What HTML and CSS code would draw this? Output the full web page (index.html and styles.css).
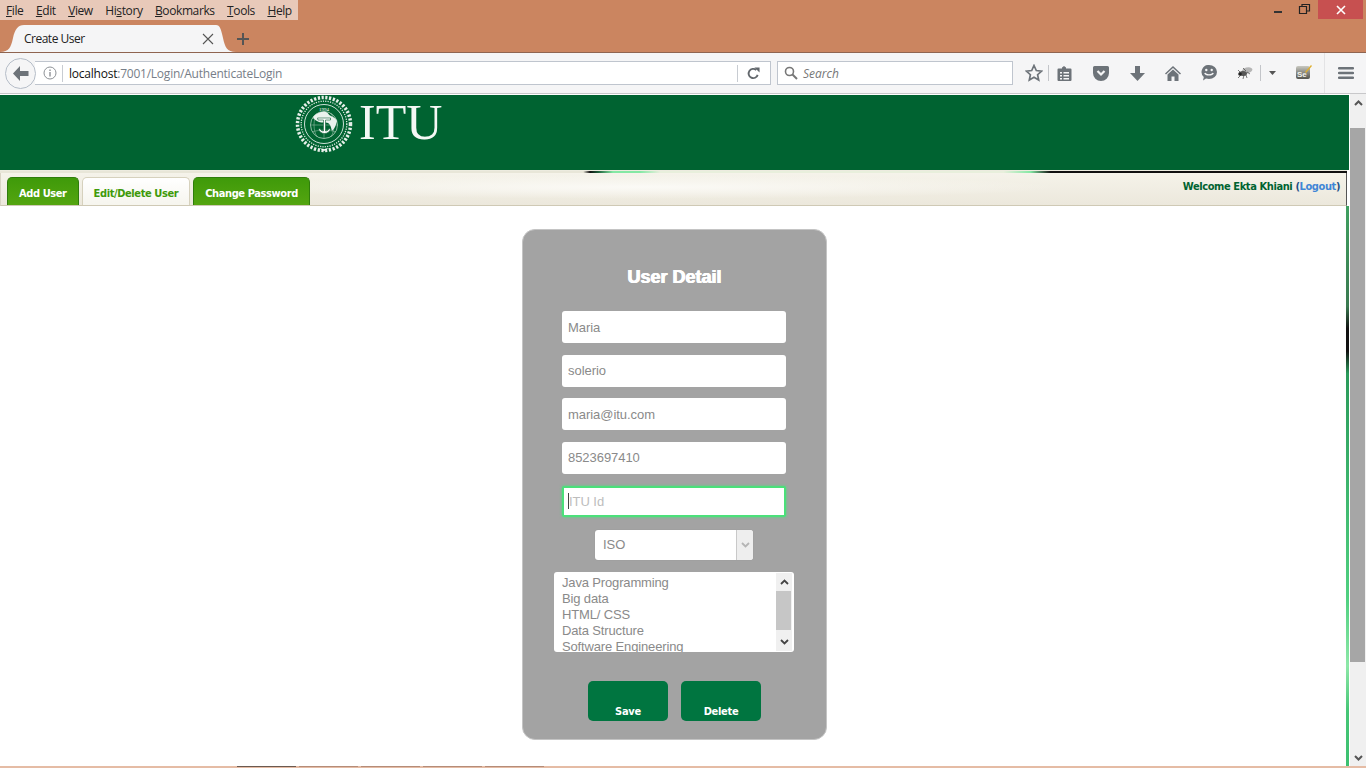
FILE: index.html
```html
<!DOCTYPE html>
<html lang="en">
<head>
<meta charset="utf-8">
<title>Create User</title>
<link rel="stylesheet" href="styles.css">
</head>
<body>
<div class="chrome">
  <div class="title-area">
    <div class="top-row">
      <nav class="menubar">
        <span><u>F</u>ile</span><span><u>E</u>dit</span><span><u>V</u>iew</span><span>Hi<u>s</u>tory</span><span><u>B</u>ookmarks</span><span><u>T</u>ools</span><span><u>H</u>elp</span>
      </nav>
      <div class="winctl">
        <svg class="wbtn" width="46" height="19" viewBox="0 0 46 19"><rect x="34" y="11" width="8" height="2" fill="#333"/></svg>
        <svg class="wbtn" width="28" height="19" viewBox="0 0 28 19"><path d="M13.500 6.500h7v7h-7zM16 6V4.500h7.500V11H21" fill="none" stroke="#222" stroke-width="1.200"/></svg>
        <div class="close"><svg width="10" height="10" viewBox="0 0 10 10"><path d="M1 1l8 8M9 1l-8 8" stroke="#fff" stroke-width="1.600"/></svg></div>
      </div>
    </div>
    <div class="tab-row">
      <div class="browser-tab">
        <svg class="tab-curve" width="24" height="27" viewBox="0 0 24 27"><path d="M0 27C9 27 11 22 13 13 15 4 18 0 24 0V27z" fill="#f5f5f6"/></svg>
        <div class="tab-body">
          <span class="tab-title">Create User</span>
          <svg width="12" height="12" viewBox="0 0 12 12"><path d="M1 1l10 10M11 1L1 11" stroke="#555" stroke-width="1.100"/></svg>
        </div>
        <svg class="tab-curve" width="20" height="27" viewBox="0 0 20 27"><path d="M20 27C11 27 9 22 7 13 5 4 4 0 0 0V27z" fill="#f5f5f6"/></svg>
      </div>
      <svg class="newtab" width="12" height="12" viewBox="0 0 12 12"><path d="M6 0v12M0 6h12" stroke="#555" stroke-width="2"/></svg>
    </div>
  </div>
  <div class="navbar">
    <div class="back">
      <svg width="17" height="15" viewBox="0 0 17 15"><path d="M8 0L1 7.500 8 15v-5h8.500V5H8z" fill="#6d7379"/></svg>
    </div>
    <div class="urlbar">
      <svg class="info" width="14" height="14" viewBox="0 0 14 14"><circle cx="7" cy="7" r="6" fill="none" stroke="#8d9196" stroke-width="1"/><rect x="6.300" y="6" width="1.400" height="4.500" fill="#8d9196"/><rect x="6.300" y="3.500" width="1.400" height="1.500" fill="#8d9196"/></svg>
      <span class="sep"></span>
      <span class="url"><b>localhost</b>:7001/Login/AuthenticateLogin</span>
      <span class="sep reload-sep"></span>
      <svg class="reload" width="13" height="13" viewBox="0 0 14 14"><path d="M11.500 8.500A5 5 0 1 1 10 3.200" fill="none" stroke="#62676c" stroke-width="2"/><path d="M8 0.500h5.500V6z" fill="#62676c"/></svg>
    </div>
    <div class="searchbar">
      <svg width="14" height="14" viewBox="0 0 14 14"><circle cx="5.500" cy="5.500" r="4" fill="none" stroke="#777" stroke-width="1.600"/><path d="M8.500 8.500l4.500 4.500" stroke="#777" stroke-width="2"/></svg>
      <span>Search</span>
    </div>
    <div class="tools">
      <svg class="t-star" width="18" height="18" viewBox="0 0 18 18"><path d="M9 1.500l2.300 5 5.300.6-4 3.600 1.100 5.300L9 13.300 4.300 16l1.100-5.300-4-3.600 5.300-.6z" fill="none" stroke="#6d7379" stroke-width="1.700"/></svg>
      <span class="tsep"></span>
      <svg class="t-list" width="15" height="15" viewBox="0 0 15 15"><path d="M1.500 2.500H5V1.500L7 0l2 1.500v1h4.500a1 1 0 0 1 1 1V14a1 1 0 0 1-1 1h-12a1 1 0 0 1-1-1V3.500a1 1 0 0 1 1-1z" fill="#6d7379"/><path d="M3 6h2v1.500H3zM6.500 6H12v1.500H6.500zM3 9h2v1.500H3zM6.500 9H12v1.500H6.500zM3 12h2v1.500H3zM6.500 12H12v1.500H6.500z" fill="#f5f5f6"/></svg>
      <svg class="t-pocket" width="16" height="15" viewBox="0 0 16 15"><path d="M1.500 0h13A1.500 1.500 0 0 1 16 1.500V7A8 8 0 0 1 0 7V1.500A1.500 1.500 0 0 1 1.500 0z" fill="#6d7379"/><path d="M4.500 5L8 8.500 11.500 5" fill="none" stroke="#f5f5f6" stroke-width="2.200"/></svg>
      <svg class="t-down" width="15" height="15" viewBox="0 0 15 15"><path d="M5 0h5v7h5l-7.500 8L0 7h5z" fill="#6d7379"/></svg>
      <svg class="t-home" width="16" height="15" viewBox="0 0 16 15"><path d="M8 0L0 7.500l1 1L8 2l7 6.500 1-1z" fill="#6d7379"/><path d="M8 3.500L2.500 8.500V15H6.500V10.500H9.500V15H13.500V8.500z" fill="#6d7379"/></svg>
      <svg class="t-smile" width="16" height="16" viewBox="0 0 16 16"><path d="M8 0a8 7 0 0 1 0 14c-1 0-2 0-3-.4L2 15.500l.8-3.400A7 7 0 0 1 8 0z" fill="#6d7379"/><circle cx="5.300" cy="5" r="1.200" fill="#f5f5f6"/><circle cx="10.700" cy="5" r="1.200" fill="#f5f5f6"/><path d="M3.800 8c1 2.500 7.400 2.500 8.400 0" fill="none" stroke="#f5f5f6" stroke-width="1.400"/></svg>
      <svg class="t-bug" width="16" height="14" viewBox="0 0 16 14"><ellipse cx="10" cy="4.500" rx="5.500" ry="3" fill="#b5b5b5" transform="rotate(-15 10 4.500)"/><ellipse cx="6" cy="7.500" rx="4" ry="2.500" fill="#555"/><circle cx="3" cy="8" r="1.800" fill="#222"/><path d="M1 4l3 3M1 12l3-3M6 13l1-4M10 12l-1-3M6 2l3 3M13 8l-3-2" stroke="#444" stroke-width=".7"/></svg>
      <span class="tsep tsep-2"></span>
      <svg class="t-caret" width="7" height="4" viewBox="0 0 7 4"><path d="M0 0h7L3.500 4z" fill="#555"/></svg>
      <svg class="t-se" width="16" height="15" viewBox="0 0 16 15"><defs><linearGradient id="seg" x1="0" y1="0" x2="0" y2="1"><stop offset="0" stop-color="#c8c8c0"/><stop offset=".5" stop-color="#8a8a84"/><stop offset="1" stop-color="#55554f"/></linearGradient></defs><rect x="0" y="2" width="14" height="13" rx="2" fill="url(#seg)"/><text x="1" y="12.500" font-size="8" font-weight="700" fill="#f2f2ea" font-family="Liberation Sans, sans-serif">Se</text><path d="M9 8l6-7 1 1-6 7z" fill="#e0b030"/></svg>
      <span class="tsep tsep-3"></span>
      <svg class="t-menu" width="16" height="12" viewBox="0 0 16 12"><path d="M1 0h14a1 1 0 0 1 0 2.400H1a1 1 0 0 1 0-2.400zM1 4.800h14a1 1 0 0 1 0 2.400H1a1 1 0 0 1 0-2.400zM1 9.600h14a1 1 0 0 1 0 2.400H1a1 1 0 0 1 0-2.400z" fill="#6d7379"/></svg>
    </div>
  </div>
</div>

<div class="viewport">
  <div class="page">
    <header class="brand">
      <div class="logo">
        <svg width="58" height="58" viewBox="0 0 58 58">
          <circle cx="29" cy="29" r="26.500" fill="none" stroke="#e6efe9" stroke-width="3.500" stroke-dasharray="2.200 1.600"/>
          <circle cx="29" cy="29" r="22.800" fill="none" stroke="#dfeae3" stroke-width="1.300" stroke-dasharray="1.200 1.200"/>
          <circle cx="29" cy="29" r="19.500" fill="none" stroke="#fff" stroke-width=".8"/>
          <text x="29" y="15.500" text-anchor="middle" font-size="5" font-family="Liberation Serif, serif" fill="#fff">1994</text>
          <circle cx="29" cy="30" r="13.500" fill="none" stroke="#cfe2d6" stroke-width=".7"/>
          <path d="M29 16.500v27M15.500 30h27M17 23c7 2.500 17 2.500 24 0M17 37c7-2.500 17-2.500 24 0M22 18c-4 7-4 17 0 24M36 18c4 7 4 17 0 24" stroke="#a9cbb6" stroke-width=".5" fill="none"/>
          <path d="M18 22c3-4 9-6 13-5 3 1 2 3 5 4 3 1 5 3 6 5-1 4-2 7-5 10-1-3-1-6-4-8-3-1-6 0-9-1-3-1-5-3-6-5z" fill="#eaf2ed"/>
          <path d="M22.500 23h13v2h-5v11c2 0 3-1 3.500-2.500l1.500.5c-.5 2.500-3 4.500-6 4.500s-5.500-2-6-4.500l1.500-.5c.5 1.500 1.500 2.500 3.500 2.500V25h-5.500z" fill="#fff" stroke="#0a5c32" stroke-width=".6"/>
          <path d="M24 53l5 3 5-3-5 1.200z" fill="#fff"/>
        </svg>
        <span class="logo-text">ITU</span>
      </div>
    </header>
    <div class="glint-row"><div class="glint"></div></div>
    <div class="tabbar">
      <ul class="tabs">
        <li class="tab">Add User</li>
        <li class="tab active">Edit/Delete User</li>
        <li class="tab">Change Password</li>
      </ul>
      <p class="welcome">Welcome Ekta Khiani <span class="paren">(<a href="#">Logout</a>)</span></p>
    </div>
    <main class="content">
      <form class="card">
        <h2>User Detail</h2>
        <input class="field" type="text" value="Maria">
        <input class="field" type="text" value="solerio">
        <input class="field" type="text" value="maria@itu.com">
        <input class="field" type="text" value="8523697410">
        <div class="field focused"><span class="caret"></span><span class="ph">ITU Id</span></div>
        <div class="select">
          <span class="sel-text">ISO</span>
          <span class="sel-btn"><svg width="9" height="6" viewBox="0 0 9 6"><path d="M1 1l3.500 3.500L8 1" fill="none" stroke="#b5b5b5" stroke-width="1.800"/></svg></span>
        </div>
        <div class="listbox">
          <div class="options">
            <div>Java Programming</div>
            <div>Big data</div>
            <div>HTML/ CSS</div>
            <div>Data Structure</div>
            <div>Software Engineering</div>
          </div>
          <div class="lb-scroll">
            <span class="lb-arrow"><svg width="9" height="6" viewBox="0 0 9 6"><path d="M1 5l3.500-3.500L8 5" fill="none" stroke="#444" stroke-width="1.800"/></svg></span>
            <span class="lb-thumb"></span>
            <span class="lb-arrow lb-down"><svg width="9" height="6" viewBox="0 0 9 6"><path d="M1 1l3.500 3.500L8 1" fill="none" stroke="#444" stroke-width="1.800"/></svg></span>
          </div>
        </div>
        <div class="actions">
          <button type="button" class="btn">Save</button>
          <button type="button" class="btn">Delete</button>
        </div>
      </form>
    </main>
  </div>
  <div class="scrollbar">
    <span class="sb-arrow"><svg width="9" height="6" viewBox="0 0 9 6"><path d="M1 5l3.500-3.500L8 5" fill="none" stroke="#555" stroke-width="2"/></svg></span>
    <span class="sb-thumb"></span>
    <span class="sb-arrow sb-down"><svg width="9" height="6" viewBox="0 0 9 6"><path d="M1 1l3.500 3.500L8 1" fill="none" stroke="#555" stroke-width="2"/></svg></span>
  </div>
</div>
<div class="strip">
  <span class="on"></span><span></span><span></span><span></span><span></span>
</div>
</body>
</html>
```
FILE: styles.css
```css
* { box-sizing: border-box; }
html, body { margin: 0; height: 768px; overflow: hidden; }
body { display: flex; flex-direction: column; background: #fff; font-family: "Liberation Sans", Arial, sans-serif; }

.chrome { flex: none; font-family: "Open Sans", "Noto Sans", sans-serif; }
.title-area { height: 53px; background: #cb8560; border-bottom: 1px solid #8f6450; }
.top-row { display: flex; justify-content: space-between; height: 24px; }
.menubar { display: flex; align-items: center; gap: 12.500px; width: 298px; height: 20px; padding-left: 6px; background: #e8c9b9; font-size: 12px; color: #222; letter-spacing: -.4px; }
.winctl { display: flex; align-items: flex-start; }
.wbtn { display: block; }
.close { display: flex; align-items: center; justify-content: center; width: 45px; height: 19px; margin-right: 3px; margin-left: 4px; background: #c75050; }
.tab-row { display: flex; align-items: flex-start; height: 28px; padding-top: 1px; }
.browser-tab { display: flex; height: 27px; }
.tab-curve { display: block; flex: none; }
.tab-body { display: flex; align-items: center; justify-content: space-between; width: 192px; height: 27px; background: #f5f5f6; font-size: 12px; color: #222; }
.tab-body svg { margin-right: 2px; }
.tab-title { letter-spacing: -.5px; }
.newtab { margin: 8px 0 0 1px; }

.navbar { display: flex; align-items: center; height: 41px; padding-left: 5px; background: #f5f5f6; border-bottom: 1px solid #c8c8ca; position: relative; }
.back { display: flex; align-items: center; justify-content: center; width: 31px; height: 31px; border: 1px solid #b5bdc8; border-radius: 50%; background: #f5f5f6; position: relative; z-index: 1; }
.urlbar { display: flex; align-items: center; width: 736px; height: 24px; margin-left: -1px; padding-left: 8px; background: #fff; border: 1px solid #bfc5ce; border-left: 0; font-size: 12px; color: #777e88; }
.info { flex: none; }
.sep { width: 1px; height: 17px; margin: 0 6px 0 5px; background: #c8ccd2; }
.url { flex: 1; letter-spacing: -.23px; }
.url b { font-weight: 400; color: #111; }
.reload-sep { margin: 0 9px 0 5px; }
.reload { margin-right: 10px; }
.searchbar { display: flex; align-items: center; gap: 5px; width: 236px; height: 24px; margin-left: 6px; padding-left: 6px; background: #fff; border: 1px solid #bfc5ce; font-size: 12px; font-style: italic; color: #777; }
.tools { display: flex; align-items: center; height: 100%; }
.t-star { margin-left: 12px; }
.tsep { width: 1px; height: 16px; margin-left: 5px; background: #c3c5c9; }
.t-list { margin-left: 8px; }
.t-pocket { margin-left: 21px; }
.t-down { margin-left: 21px; }
.t-home { margin-left: 20px; }
.t-smile { margin-left: 20px; }
.t-bug { margin-left: 20px; }
.tsep-2 { margin-left: 7px; }
.t-caret { margin-left: 8px; }
.t-se { margin-left: 20px; margin-top: -3px; }
.tsep-3 { height: 40px; margin-left: 12px; background: #e3e3e5; }
.t-menu { margin-left: 13px; }

.viewport { flex: 1; display: flex; min-height: 0; }
.page { flex: 1; min-width: 0; display: flex; flex-direction: column; }
.brand { flex: none; height: 75px; margin-top: 1px; background: #006331; padding-left: 295px; }
.logo { display: flex; align-items: flex-start; gap: 6px; }
.logo svg { display: block; }
.logo-text { margin-top: -3px; font-family: "Liberation Serif", serif; font-size: 50px; line-height: 60px; color: #f4f8f5; }
.glint-row { flex: none; height: 3px; margin-right: 2px; background: #ecebdf; padding-top: 1px; }
.glint { height: 2px; background: linear-gradient(90deg, #e8e6d8 0, #e8e6d8 43.300%, #111 43.800%, #1b5c38 44.400%, #84e8a4 45.500%, #84e8a4 47.500%, #e8efdc 49%, #e8efdc 74.500%, #84e8a4 76.500%, #111 78%, #111 100%); }
.tabbar { flex: none; display: flex; justify-content: space-between; height: 33px; margin-right: 2px; background: radial-gradient(ellipse 420px 12px at 640px 14px, #fbfaf6, transparent), linear-gradient(#f5f3ea, #ece8dc); border-bottom: 1px solid #cfc9b5; border-left: 1px solid #d8d4c4; border-right: 1px solid #555; padding-left: 6px; }
.tabs { display: flex; align-items: flex-end; gap: 3px; margin: 0; padding: 0; list-style: none; }
.tab { display: flex; align-items: center; justify-content: center; height: 28px; padding: 3px 11px 0; background: linear-gradient(#3f9a0a, #54a510); border: 1px solid #2f7d0c; border-bottom: 0; border-radius: 5px 5px 0 0; font-family: "DejaVu Sans Condensed", "DejaVu Sans", sans-serif; font-stretch: condensed; font-size: 11px; font-weight: 700; letter-spacing: -.4px; color: #fff; }
.tab.active { background: linear-gradient(#fff, #f6f5ee); border-color: #d6d1bd; color: #3f9a0a; }
.welcome { margin: 7px 6px 0 0; font-family: "DejaVu Sans Condensed", "DejaVu Sans", sans-serif; font-stretch: condensed; font-size: 11px; font-weight: 700; letter-spacing: -.4px; color: #006331; }
.welcome a { color: #3f86d6; text-decoration: none; }
.paren { color: #1f4f86; }

.content { flex: 1; display: flex; justify-content: center; min-height: 0; padding: 23px 0 0; border-right: 3px solid; border-image: linear-gradient(#3fa060 0, #3a7a50 18%, #111 22%, #111 26%, #2a9a5a 30%, #50d080 70%, #8ee8a8 82%, #46c676 90%, #3cc070 100%) 1; }
.card { display: flex; flex-direction: column; align-items: center; width: 305px; height: 511px; margin-left: 3px; padding: 37px 1px 0 0; background: #a3a3a3; border: 1px solid #c4c4c4; border-radius: 13px; }
.card h2 { margin: 0 0 24px 1px; height: 20px; font-family: "Liberation Sans", sans-serif; font-size: 18px; font-weight: 700; line-height: 20px; color: #fff; text-shadow: .5px 0 0 #fff, -.5px 0 0 #fff; }
.field { display: flex; align-items: center; flex: none; width: 224px; height: 32px; margin: 0 0 11.600px; padding: 0 6px; background: #fff; border: 0; border-radius: 3px; outline: 0; font-family: "Liberation Sans", sans-serif; font-size: 13px; letter-spacing: -.05px; color: #8a8a8a; }
.field.focused { height: 31px; margin-top: .6px; margin-bottom: 13px; padding-left: 4px; border: 2px solid #4be07a; border-radius: 2px; box-shadow: 0 0 3px #4be07a; }
.caret { width: 1px; height: 16px; background: #444; }
.ph { color: #bdbdbd; }
.select { display: flex; justify-content: space-between; align-items: center; flex: none; width: 158px; height: 30px; padding-left: 8px; margin-bottom: 12px; background: #fff; border-radius: 3px; box-shadow: 0 0 1px #888; font-size: 13px; color: #8a8a8a; }
.sel-text { padding-bottom: 1px; }
.sel-btn { display: flex; align-items: center; justify-content: center; width: 17px; height: 100%; background: #eee; border-left: 1px solid #c9c9c9; border-radius: 0 3px 3px 0; }
.listbox { display: flex; flex: none; width: 240px; height: 80px; background: #fff; border-radius: 3px; overflow: hidden; }
.options { flex: 1; padding: 3px 0 0 8px; font-size: 13px; line-height: 16px; letter-spacing: -.15px; color: #8a8a8a; }
.lb-scroll { display: flex; flex-direction: column; width: 16px; height: 78px; margin: 1px 2px 0 0; background: #f0f0f0; }
.lb-arrow { display: flex; align-items: center; justify-content: center; height: 18px; flex: none; }
.lb-thumb { height: 39px; width: 15px; flex: none; background: #c6c6c6; }
.lb-down { margin-top: auto; }
.actions { display: flex; gap: 13px; margin: 29px 0 0 1px; }
.btn { display: flex; align-items: flex-end; justify-content: center; width: 80px; height: 40px; padding: 0 0 3px; background: #007540; border: 0; border-radius: 5px; font-family: "DejaVu Sans Condensed", "DejaVu Sans", sans-serif; font-stretch: condensed; font-size: 11px; font-weight: 700; letter-spacing: -.3px; color: #fff; }

.scrollbar { flex: none; display: flex; flex-direction: column; width: 17px; background: #f0f0f0; border-left: 1px solid #fff; }
.sb-arrow { display: flex; align-items: center; justify-content: center; height: 17px; flex: none; }
.sb-thumb { height: 534px; margin-top: 17px; flex: none; background: #a6a6a6; margin-right: 1px; }
.sb-down { margin-top: auto; }

.strip { flex: none; display: flex; gap: 3px; height: 2px; padding-left: 237px; background: #e5bca5; }
.strip span { width: 59px; border-top: 1px solid #b58c78; }
.strip span.on { border-top-color: #6b5a50; }
```
